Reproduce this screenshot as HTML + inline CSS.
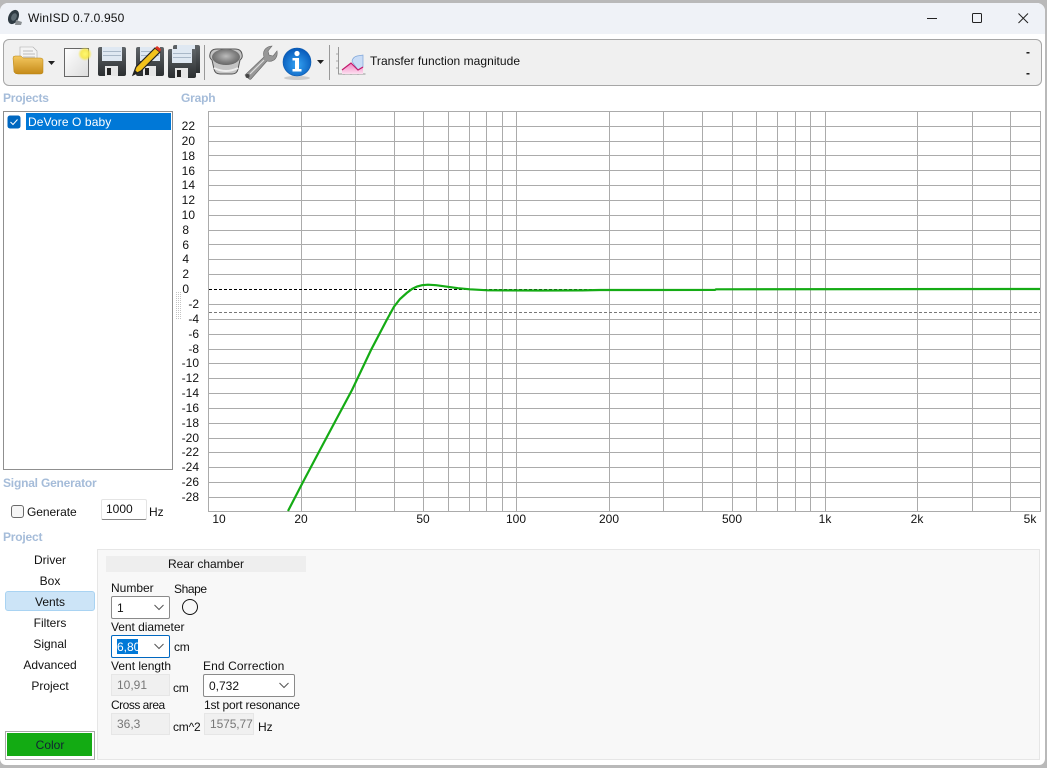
<!DOCTYPE html>
<html><head><meta charset="utf-8"><title>WinISD 0.7.0.950</title>
<style>
html,body{margin:0;padding:0;width:1047px;height:768px;overflow:hidden;background:#b9b9b9}
body{position:relative;font-family:"Liberation Sans",sans-serif;font-size:12px;color:#111}
.a{position:absolute}
.t{position:absolute;white-space:nowrap;line-height:14px;height:14px}
.h{position:absolute;white-space:nowrap;font-weight:bold;color:#a5bcd9;font-size:12px;line-height:14px;letter-spacing:-.2px}
.n{position:absolute;left:5px;width:90px;text-align:center;line-height:14px}
.sel{position:absolute;box-sizing:border-box;background:#fff;border:1px solid #8a8a8a;border-radius:2px}
.inp{position:absolute;box-sizing:border-box;background:#f0f0f0;border:1px solid #e6e6e6;color:#777;padding:3px 0 0 5px;line-height:14px}
.chev{position:absolute;right:4px;top:6px}
</style></head><body>
<div class="a" id="win" style="left:0;top:3px;width:1045px;height:762px;background:#fff;border-radius:8px 8px 6px 6px;overflow:hidden">
<div class="a" style="left:0;top:0;width:1045px;height:31px;background:#eff2f7"></div>
</div>
<svg class="a" style="left:7px;top:9px" width="16" height="17" viewBox="0 0 16 17"><ellipse cx="6.500" cy="8" rx="5" ry="7.500" transform="rotate(25 6.500 8)" fill="#2e3a42"/><ellipse cx="7" cy="8" rx="2.600" ry="4" transform="rotate(25 7 8)" fill="#5c6a72"/><path d="M9 11l6 2-1 3-6 0z" fill="#8a8f92"/></svg>
<div class="t" style="left:28px;top:11px;letter-spacing:.15px">WinISD 0.7.0.950</div>
<svg class="a" style="left:920px;top:8px" width="120" height="20"><path d="M7 10.500h10" stroke="#222" stroke-width="1"/><rect x="52.500" y="5.500" width="9" height="9" rx="1" fill="none" stroke="#222"/><path d="M98.500 5.500l9.500 9.500M108 5.500l-9.500 9.500" stroke="#222"/></svg>

<!-- toolbar -->
<div class="a" style="left:3px;top:39px;width:1037px;height:45px;box-sizing:content-box;background:#f0f0f0;border:1px solid #a6a6a6;border-radius:6px"></div>
<svg class="a" style="left:10px;top:42px" width="360" height="42" viewBox="0 0 360 42">
<defs>
<linearGradient id="fo" x1="0" y1="0" x2="0" y2="1"><stop offset="0" stop-color="#f4c860"/><stop offset="1" stop-color="#c58a18"/></linearGradient>
<linearGradient id="fl" x1="0" y1="0" x2="1" y2="1"><stop offset="0" stop-color="#fff"/><stop offset="1" stop-color="#dcdcdc"/></linearGradient>
<linearGradient id="dk" x1="0" y1="0" x2="0" y2="1"><stop offset="0" stop-color="#5f6468"/><stop offset="1" stop-color="#2c2f31"/></linearGradient>
<radialGradient id="sp" cx=".5" cy=".45" r=".6"><stop offset="0" stop-color="#bcbcbc"/><stop offset=".6" stop-color="#808080"/><stop offset="1" stop-color="#606060"/></radialGradient>
<radialGradient id="bl" cx=".5" cy=".6" r=".6"><stop offset="0" stop-color="#35a4f4"/><stop offset="1" stop-color="#0557b8"/></radialGradient>
<radialGradient id="ye" cx=".5" cy=".5" r=".5"><stop offset="0" stop-color="#fff870"/><stop offset=".6" stop-color="#f8e840" stop-opacity=".85"/><stop offset="1" stop-color="#f8e840" stop-opacity="0"/></radialGradient>
<linearGradient id="gp" x1="0" y1="0" x2="0" y2="1"><stop offset="0" stop-color="#f080c0"/><stop offset="1" stop-color="#fde0f0"/></linearGradient>
</defs>
<!-- folder -->
<path d="M10 5h13l4 4v11H10z" fill="#f4f4f4" stroke="#aaa" stroke-width=".6"/><path d="M13 9h10M13 12h12M13 15h12" stroke="#bbb"/>
<path d="M3 16q0-2 2-2h6l2 2h17q3 0 3 2v12q0 2-3 2H8q-3 0-4-2z" fill="url(#fo)" stroke="#b5820f" stroke-width=".5"/>
<path d="M38 19h7l-3.500 4z" fill="#222"/>
<!-- new -->
<rect x="54.500" y="6.500" width="24" height="28" fill="url(#fl)" stroke="#666"/>
<circle cx="75" cy="12" r="7" fill="url(#ye)"/>
<!-- floppy -->
<g id="fp"><path d="M90 5h24q2 0 2 2v25q0 2-2 2H90q-2 0-2-2V7q0-2 2-2z" fill="url(#dk)"/><rect x="92" y="5" width="20" height="14" fill="#dfe8f2"/><path d="M93 9.500h18M93 13.500h18" stroke="#a9b8c8"/><rect x="95" y="24" width="13" height="10" fill="#e6e6e6"/><rect x="97" y="26" width="4" height="7" fill="#222"/></g>
<!-- floppy edit -->
<use href="#fp" x="38"/>
<path d="M123 33l3-8 19-19 5 4-19 19z" fill="#f3c21c" stroke="#222" stroke-width="1.200"/><path d="M145 6l2-2 4 3-1 3z" fill="#d32"/><path d="M123 33l2-5 3 3z" fill="#222"/>
<!-- floppy save as -->
<path d="M165 3h23q2 0 2 2v26h-27V5q0-2 2-2z" fill="url(#dk)"/><rect x="167" y="3" width="18" height="10" fill="#dfe8f2"/>
<use href="#fp" x="70" y="2" transform="translate(0,0)"/>
<path d="M194.500 3v35" stroke="#999"/>
<!-- speaker -->
<path d="M200 12q1-5 7-5h18q6 0 7 5 1 4-2 6l-2 9q-1 5-6 5h-12q-5 0-6-5l-2-9q-3-2-2-6z" fill="#c4c4c4" stroke="#555"/>
<ellipse cx="216" cy="15" rx="14" ry="8" fill="url(#sp)"/>
<path d="M204 26q12 6 24 0" stroke="#eee" stroke-width="2" fill="none"/>
<!-- wrench -->
<path d="M238 36l-3-3 19-18q-2-7 4-10 2-1 4-1l-4 5 1 4 4 1 4-5q1 6-3 9-3 2-7 1L241 37q-1 1-3-1z" fill="#979797" stroke="#666" stroke-width=".6"/>
<circle cx="237.500" cy="34" r="2" fill="#444"/>
<path d="M240 32l14-14" stroke="#ddd" stroke-width="1.200"/>
<!-- info -->
<ellipse cx="287" cy="36" rx="13" ry="2" fill="#ccc"/>
<circle cx="287" cy="20" r="14" fill="url(#bl)" stroke="#0b59ad" stroke-width=".6"/>
<circle cx="287" cy="11.500" r="2.600" fill="#fff"/>
<path d="M282.500 16h6.500v11h2.500v2.500h-9V27h2.500v-8.500h-2.500z" fill="#fff"/>
<path d="M307 18h7l-3.500 4z" fill="#222"/>
<path d="M319.500 3v35" stroke="#999"/>
<!-- chart -->
<path d="M328.500 5v27h27" stroke="#999" fill="none"/>
<path d="M326 12h2M326 19h2M326 26h2M334 33v-1M341 33v-1M348 33v-1" stroke="#aaa"/>
<path d="M332 28l9-7 7 7 5-3v7h-21z" fill="url(#gp)"/>
<path d="M342 19q1-4 5-5l6-1v12l-5 3-5-7z" fill="#c9dcf6" stroke="#7da4d8" stroke-width=".7"/>
<path d="M332 28l9-7 7 7 5-3" stroke="#c2186b" stroke-width="1.200" fill="none"/>
</svg>
<div class="t" style="left:370px;top:54px;letter-spacing:.04px">Transfer function magnitude</div>
<div class="t" style="left:1026px;top:45px;font-weight:bold">-</div>
<div class="t" style="left:1026px;top:66px;font-weight:bold">-</div>

<div class="h" style="left:3px;top:91px">Projects</div>
<div class="h" style="left:181px;top:91px">Graph</div>
<div class="a" style="left:3px;top:111px;width:168px;height:357px;border:1px solid #8f8f8f;background:#fff"></div>
<div class="a" style="left:26px;top:113px;width:145px;height:17px;background:#0078d7"></div>
<div class="t" style="left:28px;top:115px;color:#fff;letter-spacing:.1px">DeVore O baby</div>
<svg class="a" style="left:7px;top:115px" width="14" height="14"><rect width="13" height="13" x=".5" y=".5" rx="2.500" fill="#0067c0"/><path d="M3.500 7l2.500 2.500 4.500-5" stroke="#fff" fill="none"/></svg>

<!-- graph -->
<svg class="a" style="left:176px;top:105px" width="871" height="435" viewBox="176 105 871 435" font-family="Liberation Sans, sans-serif" font-size="12" fill="#111">
<g stroke="#ababab" fill="none">
<rect x="208.500" y="111.500" width="832" height="400"/>
<path d="M209 126.500H1040M209 141.500H1040M209 155.500H1040M209 170.500H1040M209 185.500H1040M209 200.500H1040M209 215.500H1040M209 230.500H1040M209 244.500H1040M209 259.500H1040M209 274.500H1040M209 304.500H1040M209 319.500H1040M209 334.500H1040M209 349.500H1040M209 363.500H1040M209 378.500H1040M209 393.500H1040M209 408.500H1040M209 423.500H1040M209 438.500H1040M209 452.500H1040M209 467.500H1040M209 482.500H1040M209 497.500H1040"/>
<path d="M301.500 112V511M355.500 112V511M394.500 112V511M423.500 112V511M448.500 112V511M469.500 112V511M486.500 112V511M502.500 112V511M516.500 112V511M609.500 112V511M663.500 112V511M702.500 112V511M732.500 112V511M756.500 112V511M777.500 112V511M795.500 112V511M810.500 112V511M825.500 112V511M917.500 112V511M972.500 112V511M1010.500 112V511"/>
</g>
<path d="M209 289.500H1040" stroke="#000" stroke-dasharray="3 2"/>
<path d="M209 312.500H1040" stroke="#777" stroke-dasharray="3 2"/>
<path d="M288 511L303 482 321 448 337 418 352 390 371 350 386.700 320 394 306.700 400 299 406.700 293 412 289 417 286.500 422 285.200 428 284.700 436 285.200 448 286.800 458 288.200 470 289.300 488 290.300 540 290.500 582 290.400 600 290 715 289.900 716 289.300 1040 289" fill="none" stroke="#15ab15" stroke-width="2.200"/>
<g text-anchor="end">
<text x="195" y="130">22</text><text x="195" y="145">20</text><text x="195" y="160">18</text><text x="195" y="175">16</text><text x="195" y="189">14</text><text x="195" y="204">12</text><text x="195" y="219">10</text><text x="189" y="234">8</text><text x="189" y="249">6</text><text x="189" y="263">4</text><text x="189" y="278">2</text><text x="189" y="293">0</text>
<text x="199" y="308">-2</text><text x="199" y="323" >-4</text><text x="199" y="338">-6</text><text x="199" y="353">-8</text><text x="199" y="367">-10</text><text x="199" y="382">-12</text><text x="199" y="397">-14</text><text x="199" y="412">-16</text><text x="199" y="427">-18</text><text x="199" y="442">-20</text><text x="199" y="456">-22</text><text x="199" y="471">-24</text><text x="199" y="486">-26</text><text x="199" y="501">-28</text>
</g>
<g text-anchor="middle">
<text x="219" y="523">10</text><text x="301" y="523">20</text><text x="423" y="523">50</text><text x="516" y="523">100</text><text x="609" y="523">200</text><text x="732" y="523">500</text><text x="825" y="523">1k</text><text x="917" y="523">2k</text><text x="1030" y="523">5k</text>
</g>
<path d="M176.500 292v28M178.500 292v28M180.500 292v28" stroke="#c4c4c4" stroke-dasharray="1 1"/>
</svg>

<div class="h" style="left:3px;top:476px">Signal Generator</div>
<div class="a" style="left:11px;top:505px;width:11px;height:11px;border:1px solid #6a6a6a;border-radius:3px;background:#f6f6f6"></div>
<div class="t" style="left:27px;top:505px;letter-spacing:-.05px">Generate</div>
<div class="a" style="left:101px;top:499px;width:46px;height:21px;box-sizing:border-box;background:#fff;border:1px solid #e4e4e4;border-bottom:1px solid #888;border-radius:2px"></div>
<div class="t" style="left:106px;top:502px">1000</div>
<div class="t" style="left:149px;top:505px">Hz</div>
<div class="h" style="left:3px;top:530px">Project</div>

<!-- nav -->
<div class="n" style="top:553px">Driver</div>
<div class="n" style="top:574px">Box</div>
<div class="a" style="left:5px;top:591px;width:88px;height:18px;background:#cce4f7;border:1px solid #a9d3f2;border-radius:3px"></div>
<div class="n" style="top:595px">Vents</div>
<div class="n" style="top:616px">Filters</div>
<div class="n" style="top:637px">Signal</div>
<div class="n" style="top:658px">Advanced</div>
<div class="n" style="top:679px">Project</div>
<div class="a" style="left:5px;top:731px;width:86px;height:25px;border:1px solid #a8a8a8;padding:1px"><div style="width:85px;height:23px;background:#13ab13"></div></div>
<div class="n" style="top:738px;color:#123">Color</div>

<!-- panel -->
<div class="a" style="left:97px;top:549px;width:941px;height:209px;background:#f8f8f8;border:1px solid #e6e6e6"></div>
<div class="a" style="left:106px;top:556px;width:200px;height:16px;background:#eeeeee;text-align:center;line-height:16px">Rear chamber</div>

<div class="t" style="left:111px;top:581px">Number</div>
<div class="t" style="left:174px;top:582px;letter-spacing:-.4px">Shape</div>
<div class="sel" style="left:111px;top:596px;width:59px;height:23px"><span class="t" style="left:5px;top:4px">1</span><svg class="chev" width="12" height="9"><path d="M1.500 2l4.500 4.500L10.500 2" stroke="#555" fill="none"/></svg></div>
<svg class="a" style="left:181px;top:598px" width="18" height="18"><circle cx="9" cy="9" r="7.500" fill="none" stroke="#111"/></svg>

<div class="t" style="left:111px;top:620px;letter-spacing:-.05px">Vent diameter</div>
<div class="sel" style="left:111px;top:635px;width:59px;height:23px;border-color:#0067c0"><span class="a" style="left:5px;top:3px;width:21px;height:15px;background:#0078d7"></span><span class="t" style="left:5px;top:4px;color:#fff">6,80</span><svg class="chev" width="12" height="9"><path d="M1.500 2l4.500 4.500L10.500 2" stroke="#555" fill="none"/></svg></div>
<div class="t" style="left:174px;top:640px;letter-spacing:-.3px">cm</div>

<div class="t" style="left:111px;top:659px">Vent length</div>
<div class="t" style="left:203px;top:659px;letter-spacing:.1px">End Correction</div>
<div class="inp" style="left:111px;top:674px;width:59px;height:22px">10,91</div>
<div class="t" style="left:173px;top:681px;letter-spacing:-.3px">cm</div>
<div class="sel" style="left:203px;top:674px;width:92px;height:23px"><span class="t" style="left:5px;top:4px">0,732</span><svg class="chev" width="12" height="9"><path d="M1.500 2l4.500 4.500L10.500 2" stroke="#555" fill="none"/></svg></div>

<div class="t" style="left:111px;top:698px;letter-spacing:-.5px">Cross area</div>
<div class="t" style="left:204px;top:698px;letter-spacing:-.2px">1st port resonance</div>
<div class="inp" style="left:111px;top:713px;width:59px;height:22px">36,3</div>
<div class="t" style="left:173px;top:720px;letter-spacing:-.2px">cm^2</div>
<div class="inp" style="left:204px;top:713px;width:50px;height:22px;letter-spacing:-.1px">1575,77</div>
<div class="t" style="left:258px;top:720px">Hz</div>
</body></html>
